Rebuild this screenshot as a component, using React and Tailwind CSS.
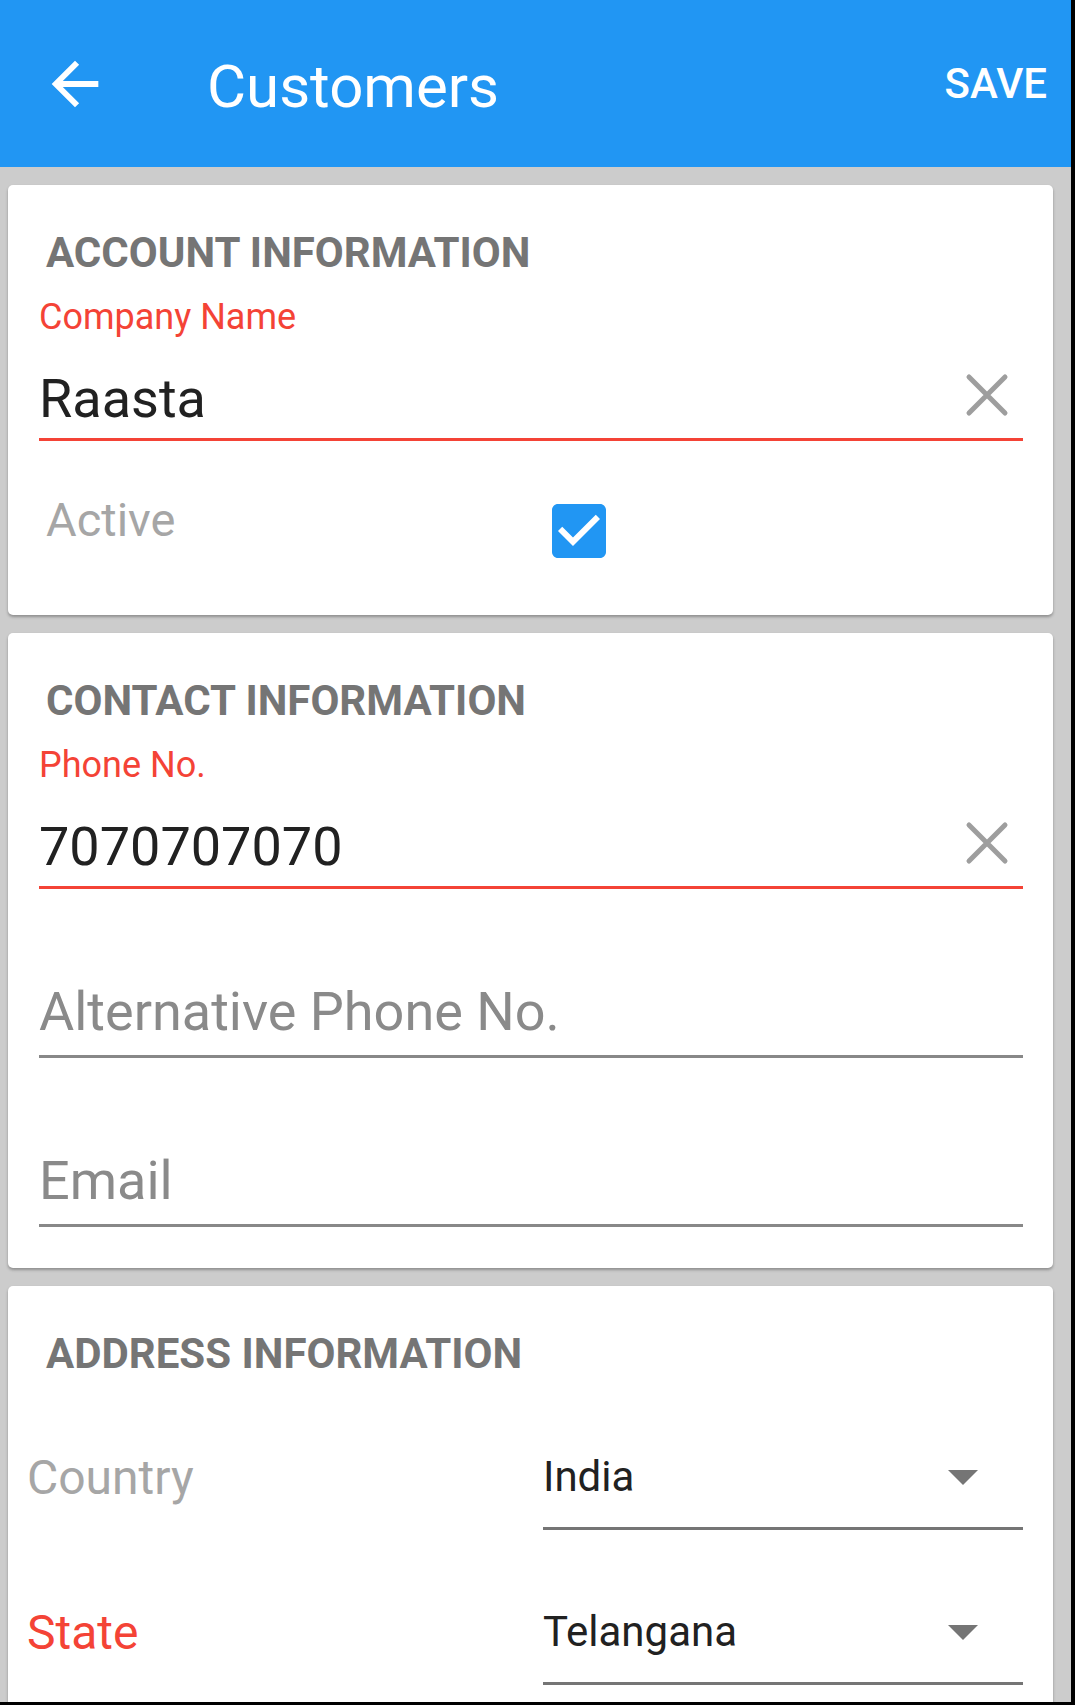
import React from "react";

function ArrowBack({ className }) {
  return (
    <svg viewBox="0 0 24 24" className={className} fill="currentColor">
      <path d="M20 11H7.83l5.59-5.59L12 4l-8 8 8 8 1.41-1.41L7.83 13H20v-2z" />
    </svg>
  );
}

function ClearIcon({ className }) {
  return (
    <svg viewBox="0 0 44 44" className={className}>
      <path
        d="M4 4L40 40M40 4L4 40"
        stroke="#9e9e9e"
        strokeWidth="5"
        strokeLinecap="round"
        fill="none"
      />
    </svg>
  );
}

function CheckBox({ className }) {
  return (
    <svg viewBox="0 0 24 24" className={className}>
      <path
        fill="#2196f3"
        d="M19 3H5c-1.11 0-2 .9-2 2v14c0 1.1.89 2 2 2h14c1.11 0 2-.9 2-2V5c0-1.1-.89-2-2-2zm-9 14l-5-5 1.41-1.41L10 14.17l7.59-7.59L19 8l-9 9z"
      />
    </svg>
  );
}

function Caret() {
  return (
    <svg viewBox="0 0 30 15" className="w-[30px] h-[15px] ml-auto mr-[45px]">
      <polygon points="0,0 30,0 15,15" fill="#757575" />
    </svg>
  );
}

function SectionTitle({ children }) {
  return (
    <h2 className="pl-[38px] text-[42px] font-bold leading-none text-[#757575]">
      {children}
    </h2>
  );
}

// filled input with floating red label
function FilledInput({ label, value }) {
  return (
    <>
      <div className="mt-[25px] pl-[31px] text-[36px] leading-none text-[#f44336]">
        {label}
      </div>
      <div className="mt-[37px] ml-[31px] mr-[30px] pb-[12px] border-b-[3px] border-[#f44336] flex items-center">
        <span className="text-[54px] leading-none text-[#212121]">{value}</span>
        <ClearIcon className="ml-auto mr-[14px] mb-[9px] w-[44px] h-[44px]" />
      </div>
    </>
  );
}

function EmptyInput({ placeholder }) {
  return (
    <div className="mt-[96px] ml-[31px] mr-[30px] pb-[16px] border-b-[3px] border-[#888888]">
      <span className="text-[54px] leading-none text-[#8a8a8a] block">{placeholder}</span>
    </div>
  );
}

function SelectRow({ label, value, labelColor, className }) {
  return (
    <div className={`flex items-start ${className}`}>
      <div className={`w-[535px] shrink-0 pl-[19px] -mt-[1px] text-[48px] leading-none ${labelColor}`}>
        {label}
      </div>
      <div className="flex-1 mr-[30px] mt-[1px]">
        <div className="flex items-center pb-[29px] border-b-[3px] border-[#757575]">
          <span className="text-[42px] leading-none text-[#212121]">{value}</span>
          <Caret />
        </div>
      </div>
    </div>
  );
}

export default function App() {
  return (
    <div className="w-[1075px] h-[1705px] bg-black font-['Roboto',sans-serif]">
      <div className="w-[1071px] h-[1702px] overflow-hidden bg-[#cccccc]">

        {/* APP BAR */}
        <header className="h-[167px] bg-[#2196f3] flex items-center text-white">
          <ArrowBack className="ml-[40px] w-[70px] h-[70px]" />
          <h1 className="ml-[97px] mt-[6px] text-[60px] leading-none">Customers</h1>
          <button className="ml-auto mr-[24px] text-[42px] font-medium leading-none">
            SAVE
          </button>
        </header>

        <div className="pl-[8px] pr-[18px] pt-[18px] flex flex-col gap-[18px]">

          {/* ACCOUNT */}
          <section className="bg-white rounded-[5px] shadow-[0_2px_3px_rgba(0,0,0,0.3)] pt-[47px] pb-[48px]">
            <SectionTitle>ACCOUNT INFORMATION</SectionTitle>
            <FilledInput label="Company Name" value="Raasta" />
            <div className="mt-[54px] flex items-start">
              <div className="w-[535px] shrink-0 pl-[38px] mt-[1px] text-[47px] leading-none text-[#a6a6a6]">
                Active
              </div>
              <CheckBox className="w-[72px] h-[72px]" />
            </div>
          </section>

          {/* CONTACT */}
          <section className="bg-white rounded-[5px] shadow-[0_2px_3px_rgba(0,0,0,0.3)] pt-[47px] pb-[41px]">
            <SectionTitle>CONTACT INFORMATION</SectionTitle>
            <FilledInput label="Phone No." value="7070707070" />
            <EmptyInput placeholder="Alternative Phone No." />
            <EmptyInput placeholder="Email" />
          </section>

          {/* ADDRESS */}
          <section className="bg-white rounded-[5px] shadow-[0_2px_3px_rgba(0,0,0,0.3)] pt-[47px] pb-[60px]">
            <SectionTitle>ADDRESS INFORMATION</SectionTitle>
            <SelectRow
              className="mt-[80px]"
              label="Country"
              value="India"
              labelColor="text-[#a6a6a6]"
            />
            <SelectRow
              className="mt-[80px]"
              label="State"
              value="Telangana"
              labelColor="text-[#f44336]"
            />
          </section>

        </div>
      </div>
    </div>
  );
}
